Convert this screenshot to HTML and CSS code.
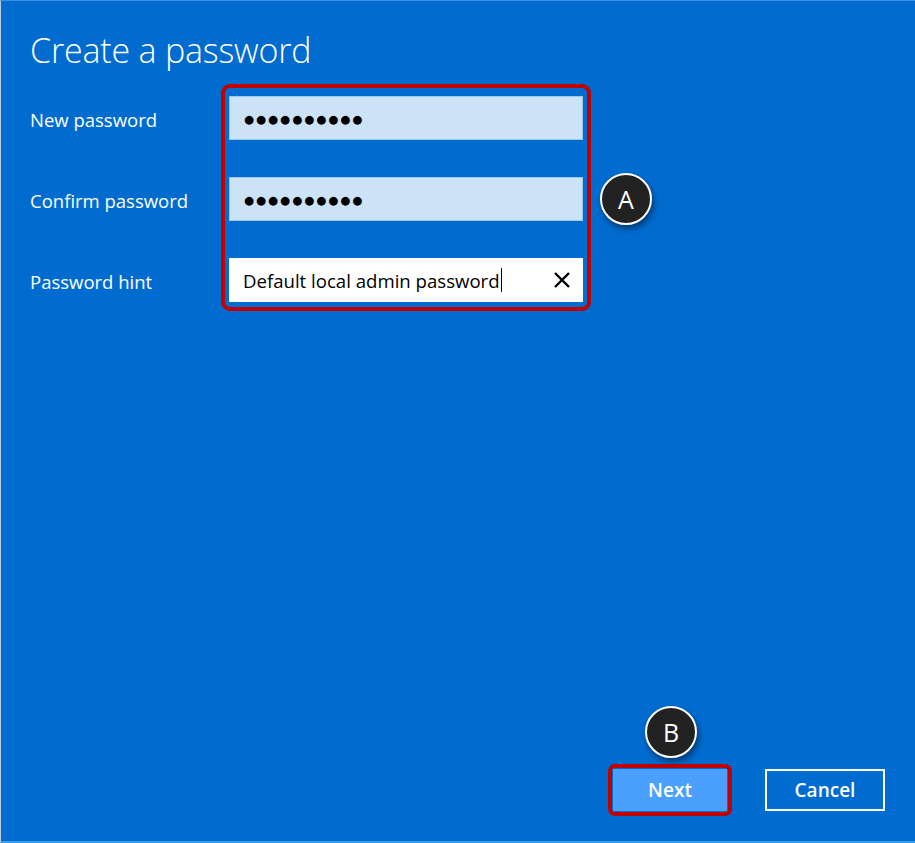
FILE: index.html
```html
<!DOCTYPE html>
<html lang="en">
<head>
    <meta charset="UTF-8">
    <title>Create a password</title>
    <link rel="stylesheet" href="styles.css">
</head>
<body>
    <div class="page">
        <h1 class="title">Create a password</h1>

        <!-- Password fields -->
        <div class="form">
            <div class="labels">
                <div class="label">New password</div>
                <div class="label">Confirm password</div>
                <div class="label">Password hint</div>
            </div>
            <div class="highlight">
                <div class="field secret"><span class="dots">●●●●●●●●●●</span></div>
                <div class="field secret"><span class="dots">●●●●●●●●●●</span></div>
                <div class="field hint">
                    <span class="hint-text">Default local admin password</span><span class="caret"></span>
                    <svg class="clear" width="18" height="18" viewBox="0 0 18 18">
                        <path d="M2 2 L16 16 M16 2 L2 16" stroke="#000" stroke-width="2.4" fill="none"/>
                    </svg>
                </div>
            </div>
            <div class="badge badge-a">A</div>
        </div>

        <!-- Bottom buttons -->
        <div class="actions">
            <div class="next-wrap">
                <button class="btn next">Next</button>
                <div class="badge badge-b">B</div>
            </div>
            <button class="btn cancel">Cancel</button>
        </div>
    </div>
</body>
</html>
```

FILE: styles.css
```css
* {
    margin: 0;
    padding: 0;
    box-sizing: border-box;
}

body {
    font-family: 'Open Sans', 'Noto Sans', sans-serif;
    background-color: #006cd0;
    color: white;
}

.page {
    display: flex;
    flex-direction: column;
    height: 843px;
    padding: 27px 30px 0 29px;
    border-left: 1px solid #b9cde2;
    border-top: 1px solid #3d8ee0;
    border-bottom: 2px solid #3d9bea;
}

.title {
    font-size: 34px;
    font-weight: 300;
    line-height: 44px;
    letter-spacing: -0.2px;
}

/* Form area */
.form {
    display: flex;
    position: relative;
    margin-top: 12px;
}

.labels {
    display: flex;
    flex-direction: column;
    gap: 37px;
    width: 191px;
    padding-top: 13px;
}

.label {
    height: 44px;
    display: flex;
    align-items: center;
    font-size: 18.5px;
}

.highlight {
    display: flex;
    flex-direction: column;
    gap: 37px;
    width: 370px;
    padding: 8px 4px 5px 4px;
    border: 4px solid #c00000;
    border-radius: 9px;
}

.field {
    height: 44px;
    display: flex;
    align-items: center;
    padding-left: 14px;
    color: #000;
}

.secret {
    background-color: #cce2f6;
    border: 1px solid #9fc8ee;
}

.dots {
    font-family: 'DejaVu Sans', sans-serif;
    font-size: 11.5px;
    letter-spacing: 2px;
    padding-top: 2px;
}

.hint {
    background-color: #fff;
}

.hint-text {
    font-size: 18.6px;
}

.caret {
    width: 1px;
    height: 24px;
    background-color: #000;
    margin-left: 1px;
}

.clear {
    margin-left: auto;
    margin-right: 12px;
}

/* Callout badges */
.badge {
    position: absolute;
    width: 52px;
    height: 52px;
    border-radius: 50%;
    background-color: #222;
    border: 2px solid #fff;
    box-shadow: 2px 4px 6px rgba(0, 0, 0, 0.45);
    color: #fff;
    font-size: 25px;
    display: flex;
    align-items: center;
    justify-content: center;
}

.badge-a {
    left: 570px;
    top: 89px;
}

.badge-b {
    left: 33px;
    top: -62px;
}

/* Buttons */
.actions {
    display: flex;
    justify-content: flex-end;
    align-items: center;
    gap: 33px;
    margin-top: auto;
    margin-bottom: 25px;
}

.next-wrap {
    position: relative;
    border: 4px solid #c00000;
    border-radius: 7px;
    padding: 1px;
}

.btn {
    font-family: 'Open Sans', 'Noto Sans', sans-serif;
    font-size: 19px;
    font-weight: 600;
    color: #fff;
    height: 42px;
    cursor: pointer;
}

.next {
    display: block;
    width: 114px;
    background-color: #4ba0ff;
    border: none;
}

.cancel {
    width: 120px;
    background-color: transparent;
    border: 2px solid #fff;
}
```
